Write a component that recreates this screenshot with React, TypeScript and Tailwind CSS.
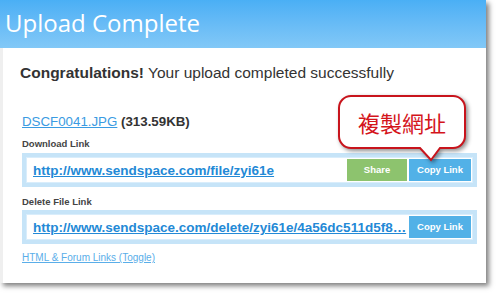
import React from "react";

const arial = { fontFamily: '"Liberation Sans", Arial, sans-serif' };

function LinkBox({ url, share }: { url: string; share?: boolean }) {
  return (
    <div className="w-[455px] h-[34px] bg-[#c6e4f8] p-[4px]">
      <div className="h-[26px] bg-white flex items-center pl-[6px] pr-[1px] border border-[#d9edfb]">
        <div className="flex-1 min-w-0 overflow-hidden whitespace-nowrap">
          <a className="text-[13.5px] leading-[16px] font-bold text-[#2389d6] underline" style={arial}>
            {url}
          </a>
        </div>
        <div className="flex gap-[2px] shrink-0">
          {share && (
            <div className="w-[60px] h-[22px] bg-[#8dc36e] text-white text-[9.5px] font-bold flex items-center justify-center" style={arial}>
              Share
            </div>
          )}
          <div className="w-[62px] h-[22px] bg-[#52b1e7] text-white text-[9.5px] font-bold flex items-center justify-center" style={arial}>
            Copy Link
          </div>
        </div>
      </div>
    </div>
  );
}

export default function App() {
  return (
    <div className="w-[500px] h-[296px] bg-white relative overflow-hidden">
      <div className="w-[486px] h-[283px] bg-white shadow-[3px_3px_5px_rgba(0,0,0,0.5)] flex flex-col">
        <div
          className="h-[48px] shrink-0 bg-gradient-to-b from-[#4aaff5] to-[#82c8f7] flex items-center pl-[5px] pb-[3px] text-white text-[24px]"
          style={{ fontFamily: '"Open Sans", sans-serif' }}
        >
          Upload Complete
        </div>
        <div className="flex-1 border-l-[3px] border-[#efefef] pl-[19px] pt-[16px]" style={arial}>
          <div className="text-[15.5px] leading-[18px] text-[#333] ml-[-2px]">
            <span className="font-bold">Congratulations!</span> Your upload completed successfully
          </div>
          <div className="mt-[32px] text-[13.3px] leading-[16px] text-[#333]">
            <a className="text-[#3a9be2] underline">DSCF0041.JPG</a>{" "}
            <span className="font-bold">(313.59KB)</span>
          </div>
          <div className="mt-[8px] text-[9.5px] leading-[12px] font-bold text-[#444]">Download Link</div>
          <div className="mt-[3px]">
            <LinkBox url="http://www.sendspace.com/file/zyi61e" share />
          </div>
          <div className="mt-[9px] text-[9.5px] leading-[12px] font-bold text-[#444]">Delete File Link</div>
          <div className="mt-[2px]">
            <LinkBox url="http://www.sendspace.com/delete/zyi61e/4a56dc511d5f8…" />
          </div>
          <div className="mt-[8px] text-[10px] leading-[12px] text-[#5aaee9] underline">
            HTML &amp; Forum Links (Toggle)
          </div>
        </div>
      </div>

      <div className="absolute left-[335px] top-[92px] w-[140px] h-[75px]">
        <svg width="140" height="75" className="absolute inset-0 drop-shadow-[2px_2px_2px_rgba(0,0,0,0.45)]">
          <path
            d="M 16 4 H 118 A 12 12 0 0 1 130 16 V 44 A 12 12 0 0 1 118 56 H 105 L 96 68 L 85 56 H 16 A 12 12 0 0 1 4 44 V 16 A 12 12 0 0 1 16 4 Z"
            fill="white"
            stroke="#c8141c"
            strokeWidth="2"
          />
        </svg>
        <div
          className="absolute left-[4px] top-[4px] w-[126px] h-[52px] flex items-center justify-center text-[22px] text-[#d4141b]"
          style={{ fontFamily: '"Noto Sans CJK TC", "Noto Sans CJK SC", sans-serif' }}
        >
          複製網址
        </div>
      </div>
    </div>
  );
}
